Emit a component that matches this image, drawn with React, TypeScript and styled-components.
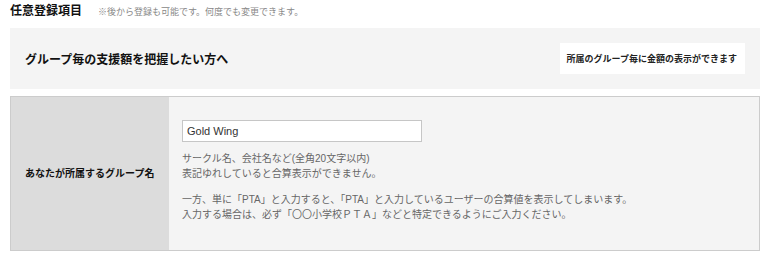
import React, { useState } from "react";
import styled, { createGlobalStyle } from "styled-components";

const GlobalStyle = createGlobalStyle`
  body {
    margin: 0;
    background: #fff;
    font-family: Arial, "Liberation Sans", "Noto Sans CJK JP", sans-serif;
    color: #222;
  }
`;

const Page = styled.div`
  width: 750px;
  padding: 0 9px 0 10px;
`;

const TitleRow = styled.div`
  display: flex;
  align-items: baseline;
  gap: 16px;
  height: 28px;
  padding-top: 3px;
  box-sizing: border-box;
`;

const Title = styled.h2`
  margin: 0;
  font-size: 12px;
  font-weight: bold;
  line-height: 16px;
  color: #111;
`;

const Note = styled.span`
  font-size: 9px;
  color: #888;
`;

const Intro = styled.div`
  display: flex;
  align-items: center;
  justify-content: space-between;
  height: 61px;
  padding: 0 15px 0 15px;
  background: #f4f4f4;
`;

const IntroHeading = styled.h3`
  margin: 0;
  font-size: 12px;
  font-weight: bold;
  color: #111;
`;

const Badge = styled.div`
  display: flex;
  align-items: center;
  height: 31px;
  padding: 0 8px 0 7px;
  background: #fff;
  font-size: 9px;
  font-weight: bold;
  color: #222;
`;

const Table = styled.div`
  display: grid;
  grid-template-columns: 158px 1fr;
  margin-top: 7px;
  height: 155px;
  border: 1px solid #cccccc;
  box-sizing: border-box;
`;

const LabelCell = styled.div`
  display: flex;
  align-items: center;
  padding: 0 0 2px 14px;
  background: #dcdcdc;
  font-size: 10px;
  font-weight: bold;
  color: #111;
`;

const FieldCell = styled.div`
  display: flex;
  flex-direction: column;
  padding: 23px 13px 0 13px;
  background: #f4f4f4;
`;

const TextInput = styled.input`
  width: 240px;
  height: 22px;
  box-sizing: border-box;
  border: 1px solid #c6c6c6;
  background: #fff;
  padding: 0 4px;
  font-family: Arial, "Liberation Sans", sans-serif;
  font-size: 11px;
  color: #333;
  outline: none;
`;

const Help = styled.p<{ $gap: number }>`
  margin: ${(p) => p.$gap}px 0 0;
  font-size: 10px;
  line-height: 15px;
  color: #666;
`;

export default function App() {
  const [group, setGroup] = useState("Gold Wing");

  return (
    <Page>
      <GlobalStyle />
      <TitleRow>
        <Title>任意登録項目</Title>
        <Note>※後から登録も可能です。何度でも変更できます。</Note>
      </TitleRow>

      <Intro>
        <IntroHeading>グループ毎の支援額を把握したい方へ</IntroHeading>
        <Badge>所属のグループ毎に金額の表示ができます</Badge>
      </Intro>

      <Table>
        <LabelCell>あなたが所属するグループ名</LabelCell>
        <FieldCell>
          <TextInput value={group} onChange={(e) => setGroup(e.target.value)} />
          <Help $gap={9}>
            サークル名、会社名など(全角20文字以内)
            <br />
            表記ゆれしていると合算表示ができません。
          </Help>
          <Help $gap={11}>
            一方、単に「PTA」と入力すると、「PTA」と入力しているユーザーの合算値を表示してしまいます。
            <br />
            入力する場合は、必ず「〇〇小学校ＰＴＡ」などと特定できるようにご入力ください。
          </Help>
        </FieldCell>
      </Table>
    </Page>
  );
}
